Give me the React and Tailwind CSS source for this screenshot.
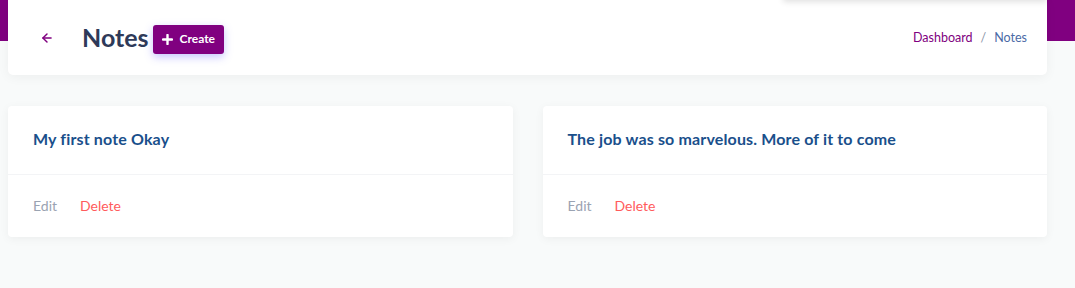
import React from "react";

function ArrowLeft() {
  return (
    <svg width="14" height="14" viewBox="0 0 24 24" fill="none" stroke="#800080" strokeWidth="2.5" strokeLinecap="round" strokeLinejoin="round">
      <path d="M19 12H5" />
      <path d="M12 19l-7-7 7-7" />
    </svg>
  );
}

function Plus() {
  return (
    <svg width="11" height="11" viewBox="0 0 12 12" fill="none" stroke="white" strokeWidth="2.6" strokeLinecap="round">
      <path d="M6 1v10M1 6h10" />
    </svg>
  );
}

function NoteCard({ title }) {
  return (
    <div className="flex-1 bg-white rounded-[4px] shadow-[0_2px_10px_rgba(0,0,0,0.05)]">
      <div className="px-[25px] pt-[23px] pb-[25px] border-b border-[#f3f4f6]">
        <h3 className="text-[16px] font-bold leading-[20px] tracking-[0.15px] text-[#1a4f8b]">{title}</h3>
      </div>
      <div className="px-[25px] pt-[22px] pb-[22px] flex gap-[23px] text-[14px] leading-[18px]">
        <span className="text-[#9aa3b2]">Edit</span>
        <span className="text-[#ff5b5c]">Delete</span>
      </div>
    </div>
  );
}

export default function App() {
  return (
    <div className="relative w-[1075px] h-[288px] bg-[#f8fafa] overflow-hidden" style={{ fontFamily: "Lato, 'Noto Sans', sans-serif" }}>
      <div className="absolute left-0 top-0 w-full h-[41px] bg-[#800080]" />
      <div className="relative pl-[8px] pr-[28px]">
        <div className="relative bg-white rounded-b-[5px] h-[75px] shadow-[0_2px_12px_rgba(0,0,0,0.05)] flex items-center pl-[32px] pr-[20px]">
          <div className="absolute right-[0px] top-[-40px] w-[264px] h-[40px] bg-white shadow-[0_2px_6px_rgba(0,0,0,0.12)]" />
          <ArrowLeft />
          <h1 className="ml-[28px] text-[25px] font-bold text-[#2e3a59] leading-none">Notes</h1>
          <button className="ml-[4px] mt-[3px] h-[29px] px-[9px] flex items-center gap-[7px] bg-[#800080] rounded-[3px] text-white text-[12px] font-bold shadow-[0_3px_8px_rgba(90,90,255,0.35)]">
            <Plus />
            <span>Create</span>
          </button>
          <div className="ml-auto flex items-center gap-[8px] text-[12.5px] mt-[1px]">
            <span className="text-[#800080]">Dashboard</span>
            <span className="text-[#8a94a6]">/</span>
            <span className="text-[#4a6aa5]">Notes</span>
          </div>
        </div>
        <div className="flex gap-[30px] mt-[31px]">
          <NoteCard title="My first note Okay" />
          <NoteCard title="The job was so marvelous. More of it to come" />
        </div>
      </div>
    </div>
  );
}
